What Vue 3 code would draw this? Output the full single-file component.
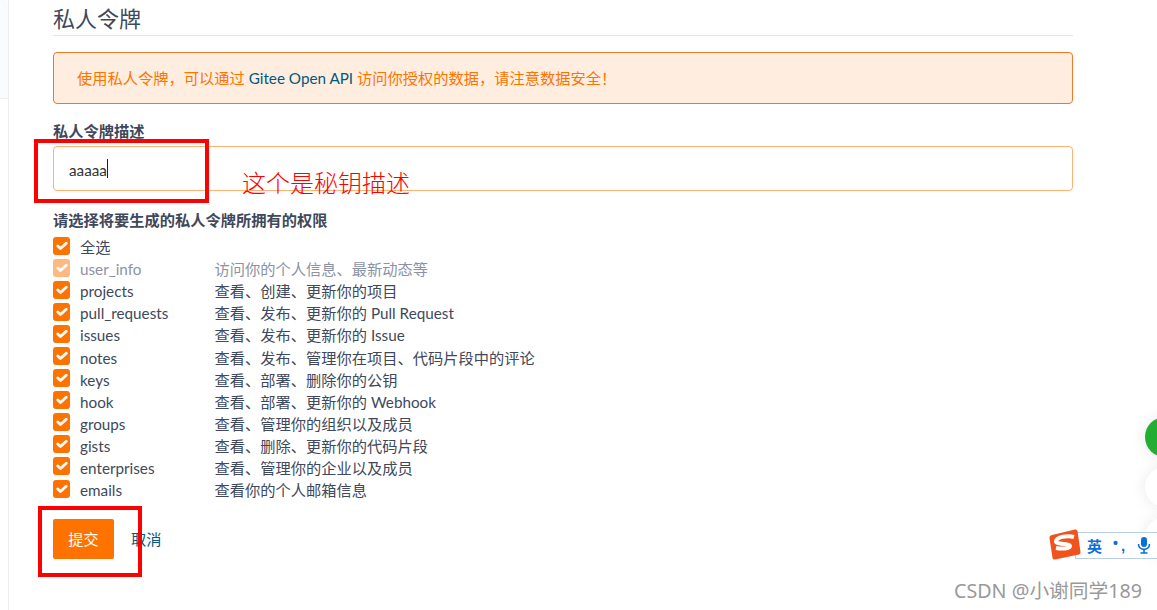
<script setup>
const perms = [
  { name: '全选', desc: '', all: true },
  { name: 'user_info', desc: '访问你的个人信息、最新动态等', disabled: true },
  { name: 'projects', desc: '查看、创建、更新你的项目' },
  { name: 'pull_requests', desc: '查看、发布、更新你的 Pull Request' },
  { name: 'issues', desc: '查看、发布、更新你的 Issue' },
  { name: 'notes', desc: '查看、发布、管理你在项目、代码片段中的评论' },
  { name: 'keys', desc: '查看、部署、删除你的公钥' },
  { name: 'hook', desc: '查看、部署、更新你的 Webhook' },
  { name: 'groups', desc: '查看、管理你的组织以及成员' },
  { name: 'gists', desc: '查看、删除、更新你的代码片段' },
  { name: 'enterprises', desc: '查看、管理你的企业以及成员' },
  { name: 'emails', desc: '查看你的个人邮箱信息' }
]
</script>

<template>
  <div class="page">
    <aside class="side"><div class="side-top"></div></aside>
    <main class="main">
      <h1 class="title">私人令牌</h1>
      <div class="alert">
        使用私人令牌，可以通过 <span class="link">Gitee Open API</span> 访问你授权的数据，请注意数据安全！
      </div>
      <div class="label first">私人令牌描述</div>
      <div class="input">aaaaa<span class="caret"></span></div>
      <div class="label second">请选择将要生成的私人令牌所拥有的权限</div>
      <div class="perms">
        <div v-for="p in perms" :key="p.name" class="row" :class="{ off: p.disabled, all: p.all }">
          <span class="box">
            <svg width="12" height="10" viewBox="0 0 12 10"><path d="M1.800 5 L4.500 7.600 L10.200 2.200" fill="none" stroke="#fff" stroke-width="2.800" stroke-linecap="round" stroke-linejoin="round"/></svg>
          </span>
          <span class="name">{{ p.name }}</span>
          <span class="desc">{{ p.desc }}</span>
        </div>
      </div>
      <div class="actions">
        <button class="submit">提交</button>
        <span class="cancel">取消</span>
      </div>
    </main>

    <div class="mark mark-a"></div>
    <div class="mark mark-b"></div>
    <div class="note">这个是秘钥描述</div>

    <div class="fab fab-green"></div>
    <div class="fab fab-w1"></div>
    <div class="fab fab-w2"></div>

    <div class="ime">
      <span class="ime-zh">英</span>
      <span class="ime-dot">•</span>
      <span class="ime-comma">,</span>
      <svg class="ime-mic" width="14" height="17" viewBox="0 0 14 17">
        <rect x="4" y="0" width="6" height="10" rx="3" fill="#0a6fd6"/>
        <path d="M1.500 7 C1.500 14 12.500 14 12.500 7" fill="none" stroke="#0a6fd6" stroke-width="1.600"/>
        <path d="M7 12 V15.500 M3.500 16 H10.500" stroke="#0a6fd6" stroke-width="1.600"/>
      </svg>
    </div>
    <svg class="ime-logo" width="32" height="31" viewBox="0 0 32 31">
      <path d="M3 6 L26 0.500 Q28 0 28.500 2 L31.500 23 Q32 25 30 25.500 L6 30.500 Q4 31 3.500 29 L0.500 9 Q0 7 3 6 Z" fill="#f0531c"/>
      <path d="M25 8 C18 6 8 8 7 12 C6 16 21 14 21 17 C21 20 12 20 7 19" fill="none" stroke="#fff" stroke-width="4"/>
    </svg>

    <div class="water">CSDN @小谢同学189</div>
  </div>
</template>

<style>
html, body { margin: 0; background: #fff; overflow: hidden; }
</style>

<style scoped>
.page {
  position: relative;
  width: 1157px;
  height: 610px;
  overflow: hidden;
  background: #fff;
  font-family: Lato, "Noto Sans CJK SC", sans-serif;
  font-size: 15.25px;
  color: #40485b;
}
.side {
  position: absolute;
  left: 0;
  top: 0;
  width: 8px;
  height: 610px;
  border-right: 1px solid #eceef1;
}
.side-top {
  height: 98px;
  background: #fafbfc;
  border-bottom: 1px solid #eceef1;
  border-top-right-radius: 4px;
}
.main {
  width: 1020px;
  margin-left: 53px;
}
.title {
  margin: 0;
  height: 35px;
  line-height: 37px;
  font-size: 22px;
  font-weight: 400;
  color: #40485b;
  border-bottom: 1px solid #e3e5e9;
}
.alert {
  box-sizing: border-box;
  height: 52px;
  margin-top: 16px;
  padding-left: 23px;
  line-height: 50px;
  background: #ffeedf;
  border: 1px solid #f0782a;
  border-radius: 4px;
  color: #fe7300;
}
.link { color: #005980; }
.label {
  font-weight: 700;
  font-size: 15.25px;
  line-height: 20px;
}
.label.first { margin-top: 17px; }
.label.second { margin-top: 19px; }
.input {
  box-sizing: border-box;
  height: 45px;
  margin-top: 5px;
  padding-left: 15px;
  padding-top: 2px;
  border: 1px solid #ffb273;
  border-radius: 4px;
  color: #333;
  display: flex;
  align-items: center;
}
.caret {
  display: inline-block;
  width: 1px;
  height: 19px;
  margin-top: -2px;
  background: #222;
}
.perms { margin-top: 6px; }
.row {
  display: flex;
  align-items: center;
  height: 22.1px;
  color: #40485b;
}
.box {
  box-sizing: border-box;
  flex: none;
  width: 17px;
  height: 18px;
  margin-top: -3px;
  border-radius: 3px;
  background: #fe7300;
  display: flex;
  align-items: center;
  justify-content: center;
}
.name { width: 134.5px; margin-left: 10px; }
.desc { color: #40485b; margin-top: -2px; }
.row.all .name { margin-top: -2px; }
.row.off .box { background: #ffb980; }
.row.off .name, .row.off .desc { color: #8c92a4; }
.actions {
  display: flex;
  align-items: center;
  margin-top: 18px;
}
.submit {
  width: 61px;
  height: 40px;
  border: 0;
  border-radius: 2px;
  background: #fe7300;
  color: #fff;
  font: inherit;
  padding: 0 0 2px;
}
.cancel { margin-left: 17px; margin-top: -2px; color: #005980; }

.mark {
  position: absolute;
  box-sizing: border-box;
  border: 4px solid #fe0000;
}
.mark-a { left: 34px; top: 139px; width: 175px; height: 64px; }
.mark-b { left: 38px; top: 506px; width: 104px; height: 71px; }
.note {
  position: absolute;
  left: 242px;
  top: 165px;
  font-size: 24px;
  line-height: 34px;
  font-weight: 300;
  color: #fe0000;
  font-family: "Noto Sans CJK SC", sans-serif;
}
.fab {
  position: absolute;
  left: 1145px;
  width: 40px;
  height: 40px;
  border-radius: 50%;
  background: #fff;
  box-shadow: 0 0 16px rgba(0, 0, 0, 0.09);
}
.fab-green { top: 417px; background: #23ae33; }
.fab-w1 { top: 467px; }
.fab-w2 { top: 517px; }
.ime {
  position: absolute;
  left: 1075px;
  top: 532px;
  width: 90px;
  height: 27px;
  box-sizing: border-box;
  background: #fff;
  border: 1px solid #b9cfe8;
  display: flex;
  align-items: center;
  padding-left: 11px;
}
.ime-zh { color: #0a6fd6; font-weight: 700; font-size: 15px; font-family: "Noto Sans CJK SC", sans-serif; }
.ime-dot { color: #0a6fd6; font-weight: 700; font-size: 14px; margin-left: 11px; margin-top: -5px; font-family: "Liberation Sans", sans-serif; }
.ime-comma { color: #0a6fd6; font-weight: 700; font-size: 15px; margin-left: 3px; font-family: "Liberation Sans", sans-serif; }
.ime-mic { margin-left: 12px; }
.ime-logo { position: absolute; left: 1049px; top: 529px; }
.water {
  position: absolute;
  left: 954px;
  top: 577px;
  font-size: 19.7px;
  line-height: 27px;
  color: #999;
  font-family: "Noto Sans", "Noto Sans CJK SC", sans-serif;
  white-space: nowrap;
}
</style>
